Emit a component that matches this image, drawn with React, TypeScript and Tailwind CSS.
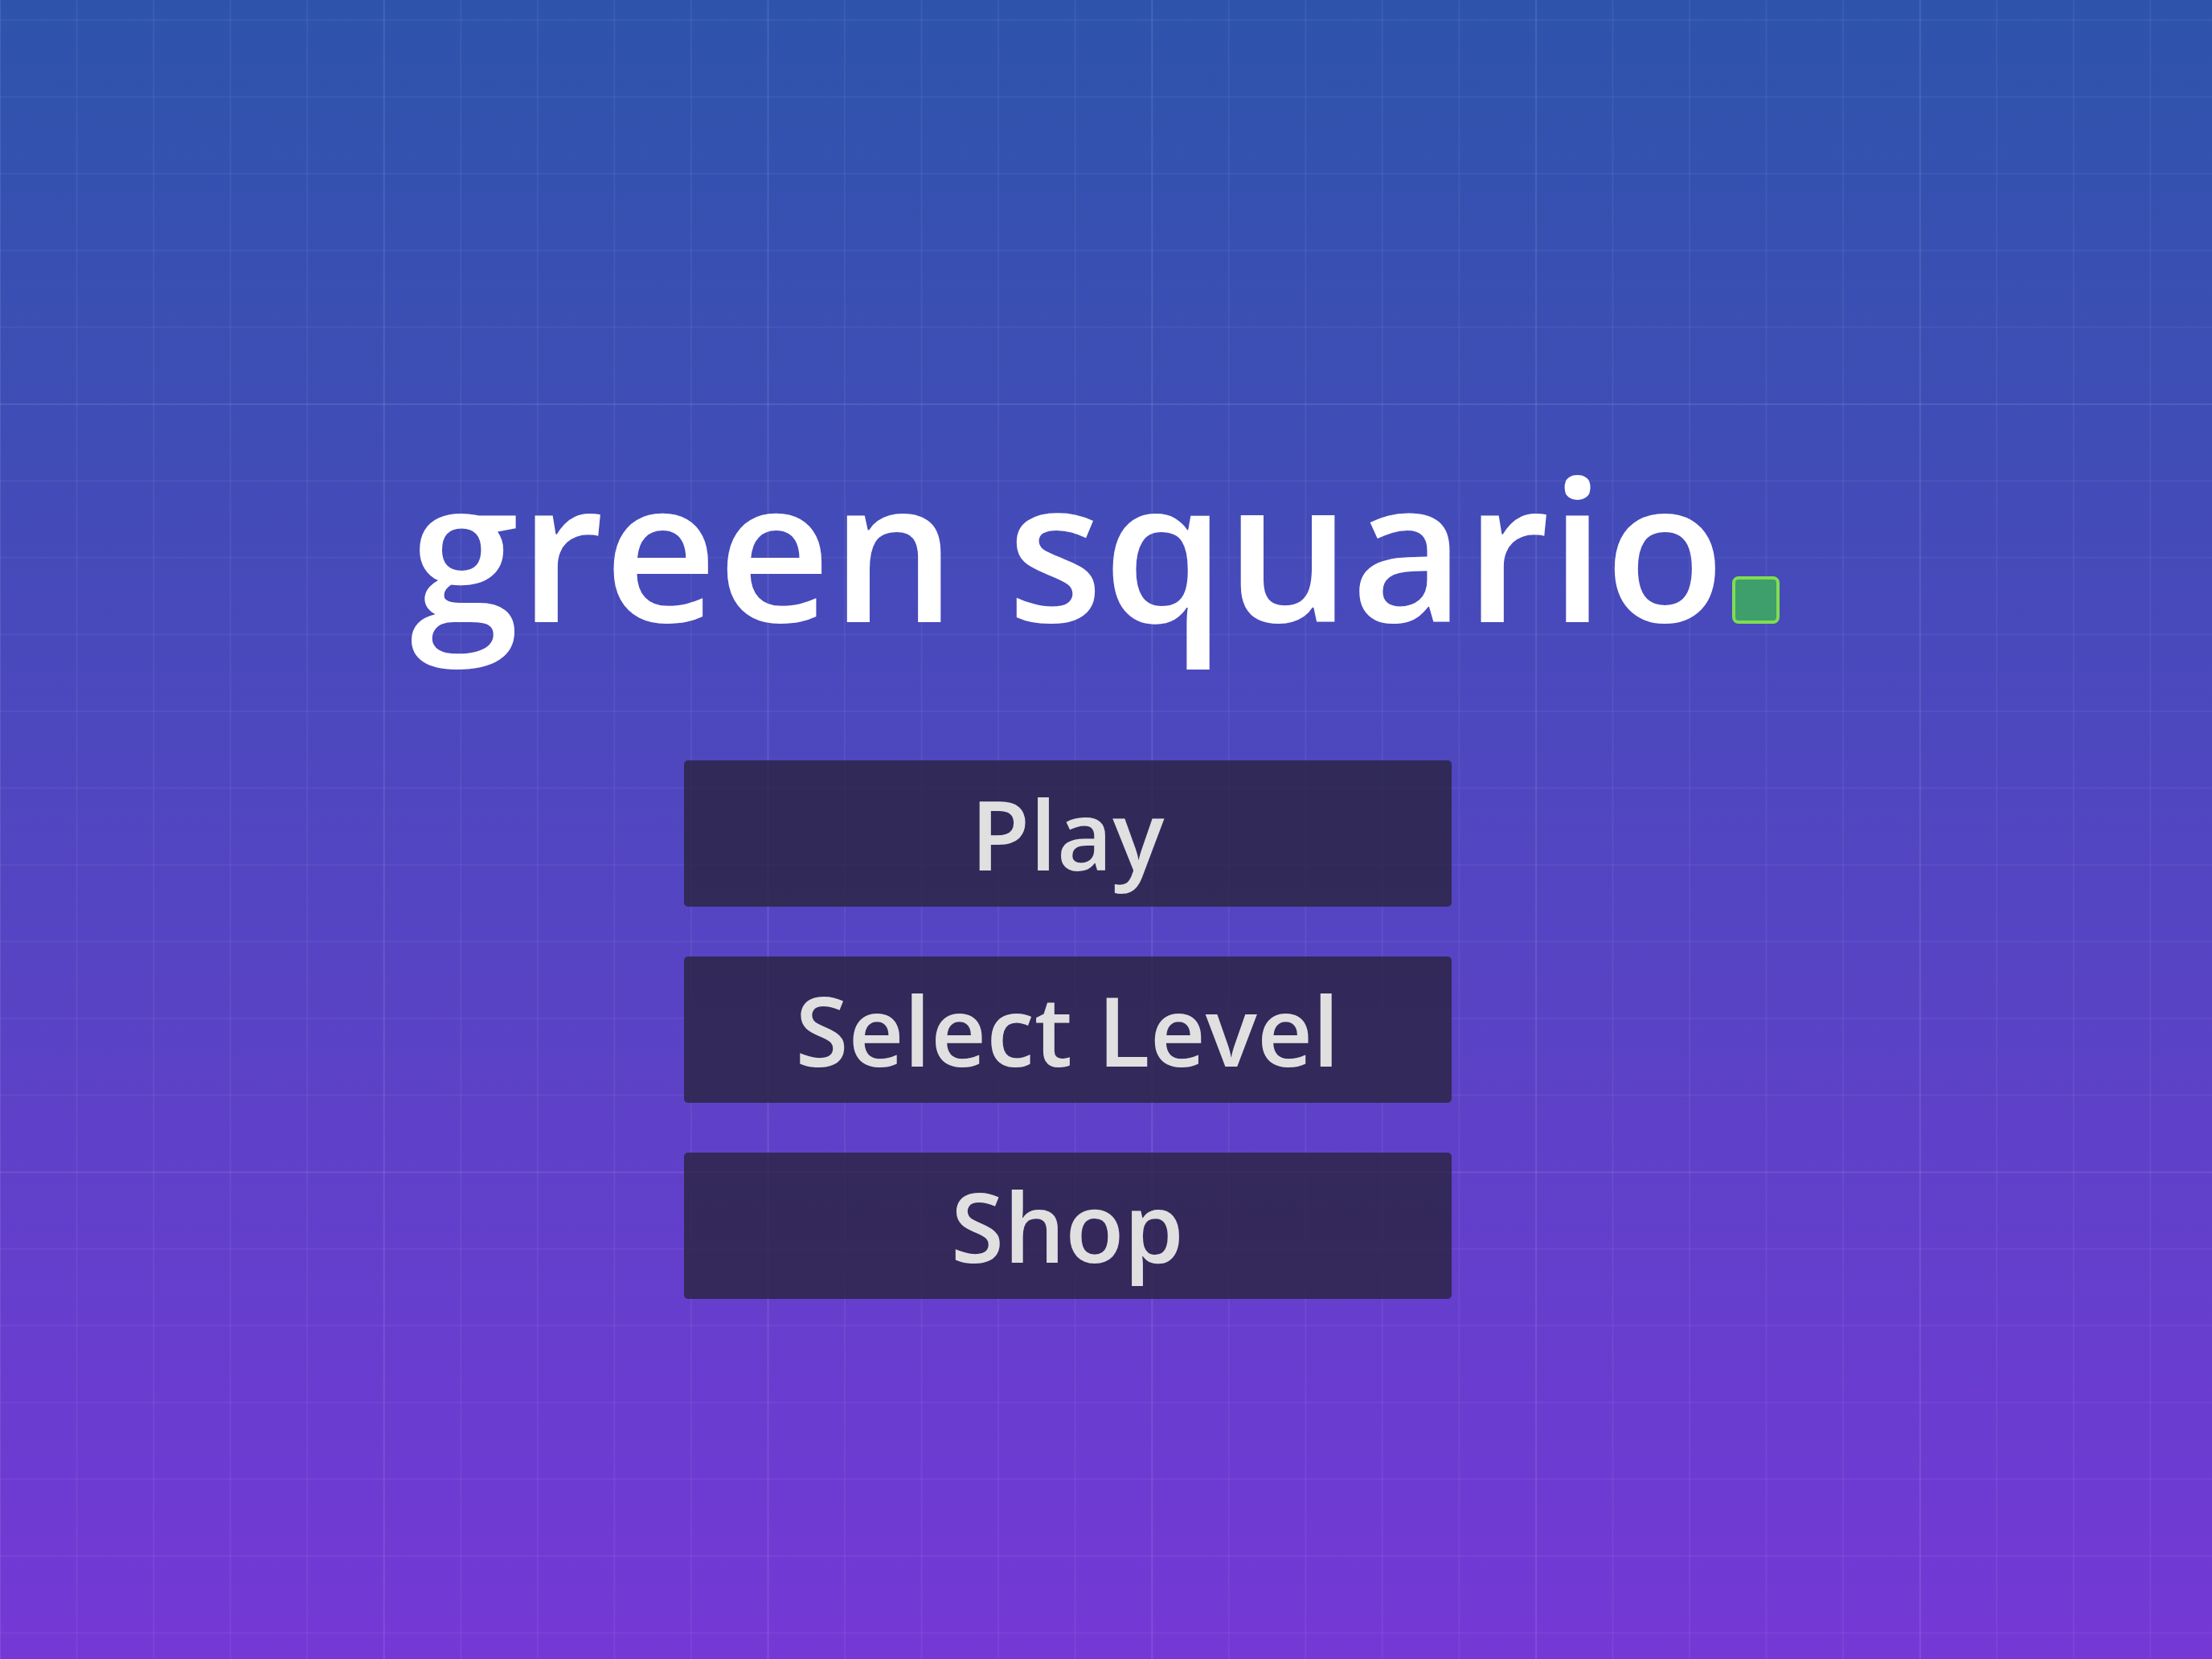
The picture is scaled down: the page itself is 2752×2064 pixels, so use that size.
const menuItems = ['Play', 'Select Level', 'Shop']

function MenuButton({ label }: { label: string }) {
  return (
    <button
      type="button"
      className="flex h-[182px] w-[955px] items-center justify-center rounded-[5px] bg-[#29233f]/80 text-[120px] font-semibold text-[#e0e0e0]"
    >
      {label}
    </button>
  )
}

export default function App() {
  return (
    <div className="h-screen w-full overflow-hidden bg-[image:linear-gradient(to_right,rgba(255,255,255,0.05)_2px,transparent_2px),linear-gradient(to_bottom,rgba(255,255,255,0.05)_2px,transparent_2px),linear-gradient(to_right,rgba(255,255,255,0.05)_2px,transparent_2px),linear-gradient(to_bottom,rgba(255,255,255,0.045)_2px,transparent_2px),linear-gradient(to_bottom,#2d54ab,#7538d6)] bg-[size:477.8px_100%,100%_955.6px,95.56px_100%,100%_95.56px,100%_100%] bg-[position:-1px_0,0_502px,-1px_0,0_24px,0_0] font-['Open_Sans',sans-serif]">
      <div className="flex flex-col items-center pt-[496px] pr-[96px]">
        {/* Title with the green square as its full stop */}
        <h1 className="relative text-[245px] font-semibold text-white">
          green squario
          <span className="absolute left-full top-[221px] ml-[9px] h-[59px] w-[59px] rounded-[8px] border-4 border-[#80dd50] bg-[#3e9f6c]" />
        </h1>

        <div className="mt-[82px] flex flex-col gap-[62px]">
          {menuItems.map((item) => (
            <MenuButton key={item} label={item} />
          ))}
        </div>
      </div>
    </div>
  )
}
